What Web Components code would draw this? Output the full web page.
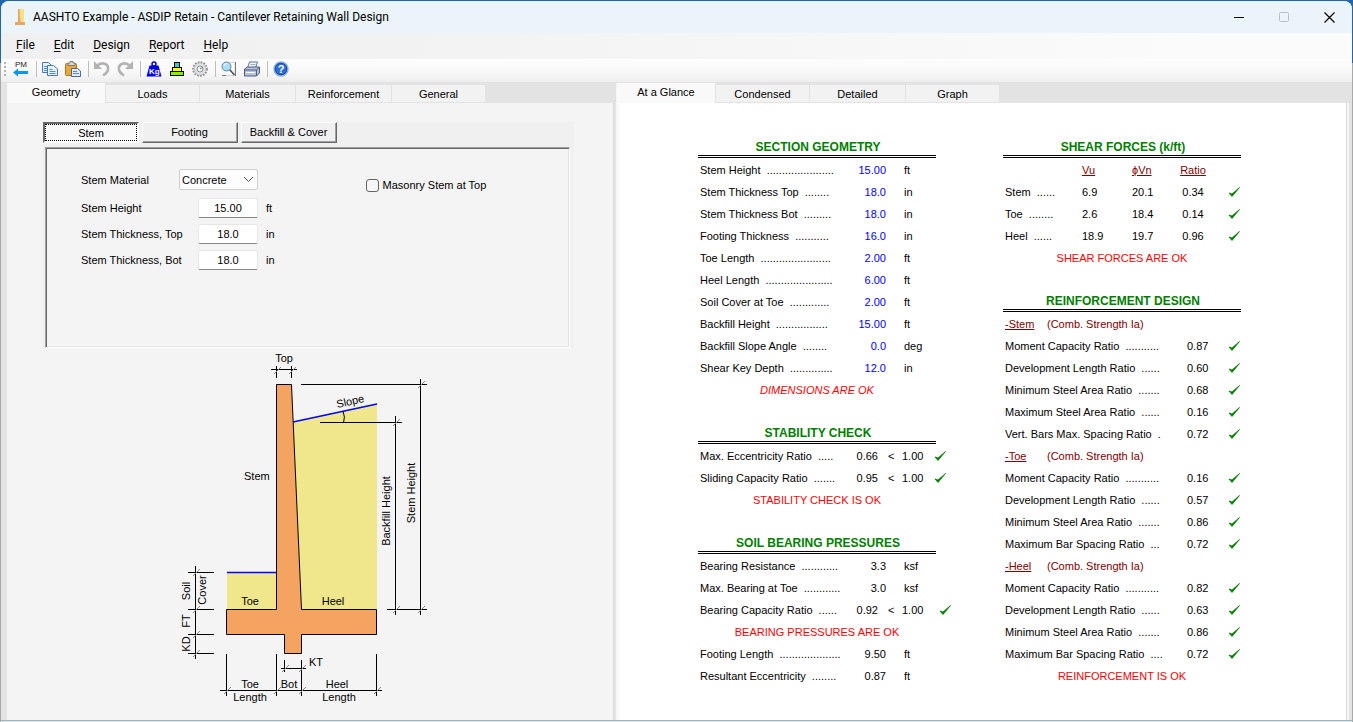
<!DOCTYPE html>
<html lang="en">
<head>
<meta charset="utf-8">
<title>AASHTO Example - ASDIP Retain</title>
<style>
  html { height: 100%; }
  body {
    margin: 0; min-height: 100%; display: flex; flex-direction: column;
    background: linear-gradient(#2166ab 0 63px, #a9a9a9 63px);
    font: 11px/14px "Liberation Sans", Arial, sans-serif; color: #000;
  }
</style>
</head>
<body>
<app-window>
  <title-bar slot="title">AASHTO Example - ASDIP Retain - Cantilever Retaining Wall Design</title-bar>
  <menu-bar slot="menu"></menu-bar>
  <tool-bar slot="tools"></tool-bar>
  <tab-pane class="input" tabs="Geometry,Loads,Materials,Reinforcement,General">
    <sub-tabs tabs="Stem,Footing,Backfill &amp; Cover"><stem-form></stem-form></sub-tabs>
    <wall-diagram></wall-diagram>
  </tab-pane>
  <tab-pane class="output" tabs="At a Glance,Condensed,Detailed,Graph">
    <glance-report></glance-report>
  </tab-pane>
</app-window>

<script>
const define = (name, html, init) => customElements.define(name, class extends HTMLElement {
  constructor() {
    super();
    const tpl = document.createElement('template');
    tpl.innerHTML = html;
    this.attachShadow({ mode: 'open' }).append(tpl.content.cloneNode(true));
  }
  connectedCallback() { if (init) init(this, this.shadowRoot); }
});

const esc = s => s.replace(/&/g, '&amp;').replace(/</g, '&lt;');

define('app-window', `
<style>
  :host { display: flex; flex-direction: column; flex: 1; margin: 1px; overflow: hidden;
    border-radius: 8px 8px 0 0; background: #e3e3e3; box-shadow: 0 1px #dbe7ea; border-bottom: 1px solid #9fb5bd; }
  main { flex: 1; display: grid; grid-template-columns: 609fr 735fr; padding: 1px 1px 0 6px; }
</style>
<slot name="title"></slot><slot name="menu"></slot><slot name="tools"></slot>
<main><slot></slot></main>`);

define('title-bar', `
<style>
  :host { display: flex; align-items: center; height: 32px; padding-left: 12px; background: #ebf4f8;
    font: 12px/16px Roboto, "Segoe UI", sans-serif; }
  h1 { font: inherit; margin: 0 auto 0 6px; }
  .logo { width: 14px; height: 18px; }
  button { width: 45px; height: 32px; border: 0; padding: 0; background: none; display: grid; place-items: center; }
</style>
<svg class="logo" viewBox="0 0 14 18"><path d="M6 1h5v14H6z" fill="#f3e28c"/><path d="M5 1h1.500l1 13H12v3H2v-3h3z" fill="#e9a766"/></svg>
<h1><slot></slot></h1>
<button aria-label="Minimize"><svg width="11" height="11"><path d="M0 5.500h10" stroke="#000"/></svg></button>
<button aria-label="Maximize" disabled><svg width="11" height="11"><rect x=".5" y=".5" width="9" height="9" rx="1" fill="none" stroke="#b9bfc2"/></svg></button>
<button aria-label="Close"><svg width="11" height="11"><path d="M.5 .5l10 10M10.500 .5l-10 10" stroke="#000" stroke-width="1.200"/></svg></button>`);

define('menu-bar', `
<style>
  :host { display: block; background: linear-gradient(90deg, #f0f0f0, #f2f2f2 30%, #fbfbfb 90%);
    font: 12px/16px Roboto, "Segoe UI", sans-serif; }
  nav { display: flex; gap: 19px; padding: 4px 15px 5px; height: 17px; }
  a { color: #000; text-decoration: none; }
  u { text-underline-offset: 2px; }
</style>
<nav><a href="#file"><u>F</u>ile</a><a href="#edit"><u>E</u>dit</a><a href="#design"><u>D</u>esign</a><a href="#report"><u>R</u>eport</a><a href="#help"><u>H</u>elp</a></nav>`);

define('tool-bar', `
<style>
  :host { box-sizing: border-box; display: flex; align-items: center; height: 23px; padding: 0 0 3px 3px;
    background: linear-gradient(#fdfdfd, #f9f9f9 50%, #eee); }
  button { width: 23px; height: 20px; padding: 0; border: 0; background: none; display: grid; place-items: center; }
  svg { width: 16px; height: 16px; display: block; }
  .grip { width: 2px; height: 14px; margin-right: 3px; background: repeating-linear-gradient(#b4b4b4 0 2px, transparent 2px 4px); }
  i { width: 1px; height: 16px; margin: 0 1px 0 4px; background: #bdbdbd; }
  text { font-family: "Liberation Sans", Arial, sans-serif; }
</style>
<span class="grip"></span>
<button aria-label="Project manager"><svg viewBox="0 0 16 16"><text x="2" y="6" font-size="8" fill="#222">PM</text><path d="M0 11.500l5-4v2.500h10v3H5v2.500z" fill="#0a96f5"/></svg></button>
<i></i>
<button aria-label="Copy"><svg viewBox="0 0 16 16"><g fill="#e8f1fc" stroke="#4a76b8"><path d="M.5 1.500h6l3 3v7h-9z"/><path d="M5.500 4.500h6l4 3.500v6.500h-10z"/></g><path d="M2 5.500h3M2 7.500h3M2 9.500h3M7.500 8.500h3M7.500 10.500h6M7.500 12.500h6" stroke="#4a90d8"/></svg></button>
<button aria-label="Paste"><svg viewBox="0 0 16 16"><rect x=".5" y="2.500" width="11" height="12" rx="1" fill="#e8a93a" stroke="#b3761b"/><path d="M3 4.500V2h2V.5h3V2h2v2.500z" fill="#d8d8d8" stroke="#666" stroke-width=".8"/><path d="M6.500 7.500h6l3 2.500v5.500h-9z" fill="#dfeafa" stroke="#50688e"/><path d="M8 10.500h4M8 12.500h6" stroke="#5a86c0"/></svg></button>
<i></i>
<button aria-label="Undo"><svg viewBox="0 0 16 16"><path d="M3 5C8 0 15 3 14 8.500c-.4 3-2.500 4.500-5 6" fill="none" stroke="#b3b3b3" stroke-width="2.600"/><path d="M0 0v8h8z" fill="#b3b3b3"/></svg></button>
<button aria-label="Redo"><svg viewBox="0 0 16 16"><path d="M13 5C8 0 1 3 2 8.500c.4 3 2.500 4.500 5 6" fill="none" stroke="#b3b3b3" stroke-width="2.600"/><path d="M16 0v8H8z" fill="#b3b3b3"/></svg></button>
<i></i>
<button aria-label="Units"><svg viewBox="0 0 16 16"><path d="M3.500 4.500h9L15.500 15.500H.5z" fill="#0000f0"/><circle cx="8" cy="3" r="2" fill="none" stroke="#0000f0" stroke-width="1.500"/><text x="3" y="13" font-size="8" font-weight="bold" fill="#fff">Kg</text></svg></button>
<button aria-label="Load combinations"><svg viewBox="0 0 16 16" stroke="#000"><rect x="5.500" y="1.500" width="5" height="5" fill="#3cc"/><rect x="3.500" y="6.500" width="9" height="4" fill="#ff0"/><rect x="1.500" y="10.500" width="13" height="4" fill="#8e0"/></svg></button>
<button aria-label="Options"><svg viewBox="0 0 16 16"><circle cx="8" cy="8" r="6.900" fill="none" stroke="#8c8c8c" stroke-width="1.800" stroke-dasharray="1.700 1.300"/><circle cx="8" cy="8" r="6" fill="#dfe2e6" stroke="#aaa" stroke-width=".6"/><circle cx="8" cy="8" r="3" fill="#f4f6f8" stroke="#8a8f94"/><path d="M8 8l3-2" stroke="#777"/></svg></button>
<i></i>
<button aria-label="Preview"><svg viewBox="0 0 16 16"><path d="M3 1.500h11v13h-9" fill="#fff" stroke="#d5d5d5"/><path d="M14.500 1v14M1 14.500h4" stroke="#777"/><path d="M8.500 8.500l5 5.500" stroke="#555" stroke-width="1.800"/><circle cx="5.500" cy="5.500" r="4.500" fill="#a9def5" stroke="#5d87a8"/><path d="M3 5a3 3 0 013-2.500" stroke="#fff" fill="none"/></svg></button>
<button aria-label="Print"><svg viewBox="0 0 16 16"><path d="M5.500 1h8l-2 6h-8z" fill="#f2f7fd" stroke="#5d7598"/><path d="M.5 8l3-2h12v6l-3 3H.5z" fill="#b5c2d8" stroke="#4d5f80"/><path d="M.5 9h12l3-3M12.500 9v6" stroke="#4d5f80" fill="none"/><path d="M2 11.500h9" stroke="#fff"/><path d="M6.500 3.500h5M6 5.500h5" stroke="#9ab"/></svg></button>
<i></i>
<button aria-label="Help"><svg viewBox="0 0 16 16"><circle cx="8" cy="8" r="7" fill="#2a6fd6" stroke="#8fb0dc" stroke-width="1.500"/><circle cx="8" cy="8" r="5.700" fill="none" stroke="#1a4ca8"/><text x="8" y="12" font-size="11" font-weight="bold" text-anchor="middle" fill="#fff">?</text></svg></button>`);

/* Tab strip with its page; the first tab is the selected one. */
define('tab-pane', `
<style>
  :host { display: flex; flex-direction: column; min-width: 0; }
  [role=tablist] { display: flex; height: 20px; align-items: flex-end; }
  button { box-sizing: border-box; width: 96px; height: 18px; padding: 0; border: solid #e3e3e3; border-width: 0 0 1px 1px;
    background: #f2f2f2; font: inherit; color: inherit; }
  [aria-selected=true] { width: 98px; height: 20px; border: 0; background: #f9f9f9; padding-bottom: 2px; }
  [aria-selected=true] + button, button:last-child { width: 94px; }
  .page { flex: 1; background: #f4f4f4; border-right: 1px solid #dcdcdc; margin-right: 2px; }
  :host(.output) { border-left: 1px solid #f6f6f6; }
  :host(.output) .page { background: #fff; border-left: 2px solid #f9f9f9; box-shadow: 2px 0 #f4f4f4; margin-right: 4px; }
</style>
<div role="tablist"></div><div class="page" role="tabpanel"><slot></slot></div>`,
(el, root) => {
  root.querySelector('[role=tablist]').innerHTML = el.getAttribute('tabs').split(',')
    .map((t, i) => `<button role="tab" aria-selected="${i === 0}">${esc(t)}</button>`).join('');
});

/* Classic raised buttons above a sunken page. */
define('sub-tabs', `
<style>
  :host { display: block; margin: 19px 39px 0 36px; background: #f0f0f0; }
  [role=tablist] { display: flex; gap: 3px; padding-bottom: 4px; }
  button { box-sizing: border-box; width: 96px; height: 21px; padding: 0 1px 1px 0; font: inherit; color: inherit;
    background: #f0f0f0; border: 1px solid; border-color: #fff #696969 #696969 #fff; box-shadow: inset -1px -1px #a0a0a0; }
  [aria-selected=true] { background: #f9f9f9; border: 2px solid; border-color: #696969 #fff #fff #696969; box-shadow: none;
    outline: 1px dotted #000; outline-offset: -3px; padding: 0; }
  .page { box-sizing: border-box; height: 201px; margin: 0 4px 0 2px; background: #f4f4f4; border: 1px solid;
    border-color: #a0a0a0 #fff #fff #a0a0a0; box-shadow: inset 1px 1px #696969, inset -1px -1px #e3e3e3; }
</style>
<div role="tablist"></div><div class="page"><slot></slot></div>`,
(el, root) => {
  root.querySelector('[role=tablist]').innerHTML = el.getAttribute('tabs').split(',')
    .map((t, i) => `<button role="tab" aria-selected="${i === 0}">${esc(t)}</button>`).join('');
});

define('stem-form', `
<style>
  :host { display: flex; align-items: flex-start; gap: 91px; padding: 19px 35px; white-space: nowrap; }
  .fields { display: grid; grid-template-columns: 98px 79px auto; grid-template-rows: 25px 20px 20px 20px; row-gap: 6px;
    align-items: center; }
  .pick { display: grid; align-items: center; }
  .pick > * { grid-area: 1 / 1; }
  .pick svg { justify-self: end; margin-right: 4px; pointer-events: none; }
  select { appearance: none; width: 79px; height: 21px; border: 1px solid #cfcfcf; border-radius: 2px; background: #fdfdfd;
    padding: 0 2px; font: inherit; color: inherit; }
  input[type=text] { box-sizing: border-box; justify-self: end; width: 60px; height: 20px; padding: 0; text-align: center;
    border: 1px solid #e8e8e8; border-bottom-color: #868686; border-radius: 2px; background: #fff; font: inherit; color: inherit; }
  .unit { padding-left: 8px; }
  .check { display: flex; align-items: center; gap: 4px; padding-top: 11px; }
  .check input { appearance: none; box-sizing: border-box; width: 13px; height: 13px; margin: 0; border: 1px solid #666; border-radius: 3px; background: #f6f6f6; }
</style>
<div class="fields">
  <label for="mat">Stem Material</label>
  <span class="pick"><select id="mat"><option>Concrete</option><option>Masonry</option></select>
    <svg width="11" height="7"><path d="M1 1l4.500 4.500L10 1" fill="none" stroke="#555"/></svg></span><span></span>
  <label for="h">Stem Height</label><input id="h" type="text" value="15.00"><span class="unit">ft</span>
  <label for="tt">Stem Thickness, Top</label><input id="tt" type="text" value="18.0"><span class="unit">in</span>
  <label for="tb">Stem Thickness, Bot</label><input id="tb" type="text" value="18.0"><span class="unit">in</span>
</div>
<label class="check"><input type="checkbox">Masonry Stem at Top</label>`);

/* Dimension lines end in an oblique tick; each tick is drawn at the crossing point. */
const ticks = [[277,370],[292,370],[421,384],[396,422],[396,609],[421,609],[196,572],[196,609],[196,634],[196,653],
  [285,668],[302,668],[227,690],[277,690],[302,690],[377,690]]
  .map(([x, y]) => `M${x - 3} ${y + 4}l7 -7`).join('');

define('wall-diagram', `
<style>
  :host { display: block; padding-left: 163px; }
  svg { display: block; }
  text { font: 11px "Liberation Sans", Arial, sans-serif; }
  .m { text-anchor: middle; }
</style>
<svg width="280" height="359" viewBox="170 348 280 359" role="img" aria-label="Retaining wall dimensions">
  <path d="M293 422L377 404V609H302zM227 573h50v36h-50z" fill="#f0e68c"/>
  <path d="M276.500 384.500H291.500L301.500 609.500H376.500V634.500H301.500V653.500H284.500V634.500H226.500V609.500H276.500z" fill="#f4a460" stroke="#000"/>
  <path d="M293 422L377 404M227 572.500H276" stroke="#00f" stroke-width="1.600" fill="none"/>
  <g stroke="#000" fill="none">
    <path d="M271 369.500H297M276.500 366V378M291.500 366V378"/>
    <path d="M301 384.500H427M420.500 379V615M320 422.500H402M395.500 416V615M387 609.500H427"/>
    <path d="M343 411Q345.500 417 343.500 423"/>
    <path d="M188 572.500H214M188 609.500H214M188 634.500H214M188 653.500H214M195.500 566V659"/>
    <path d="M281 668.500H306M284.500 660V672"/>
    <path d="M220 690.500H382M226.500 654V696M276.500 654V696M301.500 660V696M376.500 654V696"/>
    <path d="${ticks}" stroke="#888"/>
  </g>
  <text class="m" x="284" y="362">Top</text>
  <text x="244" y="480">Stem</text>
  <text class="m" transform="translate(351 405) rotate(-12)">Slope</text>
  <text class="m" x="250" y="605">Toe</text>
  <text class="m" x="333" y="605">Heel</text>
  <text class="m" transform="translate(390 511) rotate(-90)">Backfill Height</text>
  <text class="m" transform="translate(415 493) rotate(-90)">Stem Height</text>
  <text class="m" transform="translate(190 591) rotate(-90)">Soil</text>
  <text class="m" transform="translate(206 590) rotate(-90)">Cover</text>
  <text class="m" transform="translate(190 621) rotate(-90)">FT</text>
  <text class="m" transform="translate(190 644) rotate(-90)">KD</text>
  <text x="309" y="666">KT</text>
  <text class="m" x="250" y="688">Toe</text>
  <text class="m" x="250" y="701">Length</text>
  <text class="m" x="289" y="688">Bot</text>
  <text class="m" x="337" y="688">Heel</text>
  <text class="m" x="339" y="701">Length</text>
</svg>`);

define('check-mark', `
<style>:host { display: block; white-space: normal; } svg { display: block; }</style>
<svg width="12" height="11" role="img" aria-label="OK"><path d="M1 6l3 3.500L11.500 .5L4 7z" fill="#008000" stroke="#008000" stroke-width=".8"/></svg>`);

const reportCss = `
<style>
  :host { display: block; }
  h2 { box-sizing: border-box; height: 21px; margin: 0 0 1px; padding-left: 2px; border-bottom: 3px double #000;
    font-size: 12px; line-height: 20px; text-align: center; color: #008000; }
  table { border-collapse: collapse; table-layout: fixed; width: 252px; }
  td, th { height: 22px; padding: 0; font-weight: normal; text-align: left; white-space: pre; }
  th { padding-left: 2px; }
  .num { text-align: right; }
  .mid { text-align: center; }
  .blue { color: #00f; }
  .mark { padding-left: 4px; }
  .far .mark { padding-left: 9px; }
  .head { color: #800000; }
  p { margin: 0; line-height: 22px; text-align: center; color: #f00; }
  .slant { font-style: italic; }
</style>`;
const dots = n => '.'.repeat(n);
const cols = list => `<colgroup>${list.map(w => `<col style="width:${w}px">`).join('')}</colgroup>`;

/* Rows of label, value and unit, or label, ratio < limit and a tick. */
const valueTable = (rows, cls = '') => `<table>${cols([150, 38, 16, 28, 20])}${rows.map(([label, n, v, unit, far]) =>
  unit === '<'
    ? `<tr class="${far ? 'far' : ''}"><th scope="row">${label}  ${dots(n)}</th><td class="num" style="padding-right:8px">${v}</td><td style="padding-left:2px">&lt;</td><td>1.00</td><td class="mark"><check-mark></check-mark></td></tr>`
    : `<tr><th scope="row">${label}  ${dots(n)}</th><td class="num ${cls}">${v}</td><td></td><td style="padding-left:2px">${unit}</td><td></td></tr>`).join('')}</table>`;

const ratioTable = (name, rows) => `<table>${cols([42, 142, 40, 28])}
  <tr class="head"><th scope="rowgroup"><u>-${name}</u></th><td colspan="3" style="padding-left:2px">(Comb. Strength Ia)</td></tr>
  ${rows.map(([label, n, v]) => `<tr><th scope="row" colspan="2">${label}  ${dots(n)}</th><td>${v}</td><td style="padding-left:1px"><check-mark></check-mark></td></tr>`).join('')}</table>`;

const section = (name, title, body) => define(name, `${reportCss}<h2>${title}</h2>${body}`);

section('section-geometry', 'SECTION GEOMETRY', valueTable([
  ['Stem Height', 22, '15.00', 'ft'], ['Stem Thickness Top', 8, '18.0', 'in'], ['Stem Thickness Bot', 9, '18.0', 'in'],
  ['Footing Thickness', 11, '16.0', 'in'], ['Toe Length', 23, '2.00', 'ft'], ['Heel Length', 22, '6.00', 'ft'],
  ['Soil Cover at Toe', 13, '2.00', 'ft'], ['Backfill Height', 17, '15.00', 'ft'], ['Backfill Slope Angle', 8, '0.0', 'deg'],
  ['Shear Key Depth', 14, '12.0', 'in']], 'blue') + '<p class="slant">DIMENSIONS ARE OK</p>');

section('stability-check', 'STABILITY CHECK', valueTable([
  ['Max. Eccentricity Ratio', 5, '0.66', '<'], ['Sliding Capacity Ratio', 7, '0.95', '<']]) + '<p>STABILITY CHECK IS OK</p>');

section('bearing-pressures', 'SOIL BEARING PRESSURES', valueTable([
  ['Bearing Resistance', 12, '3.3', 'ksf'], ['Max. Bearing at Toe', 12, '3.0', 'ksf'], ['Bearing Capacity Ratio', 6, '0.92', '<', true]])
  + '<p>BEARING PRESSURES ARE OK</p>' + valueTable([['Footing Length', 20, '9.50', 'ft'], ['Resultant Eccentricity', 8, '0.87', 'ft']]));

section('shear-forces', 'SHEAR FORCES (k/ft)', `<table>${cols([79, 50, 46, 30, 19, 28])}
  <tr class="head"><td></td><td><u>Vu</u></td><td><u>ϕVn</u></td><td class="mid"><u>Ratio</u></td><td></td><td></td></tr>
  ${[['Stem', 6, '6.9', '20.1', '0.34'], ['Toe', 8, '2.6', '18.4', '0.14'], ['Heel', 6, '18.9', '19.7', '0.96']].map(r =>
    `<tr><th scope="row">${r[0]}  ${dots(r[1])}</th><td>${r[2]}</td><td>${r[3]}</td><td class="mid">${r[4]}</td><td></td><td style="padding-left:1px"><check-mark></check-mark></td></tr>`).join('')}
</table><p>SHEAR FORCES ARE OK</p>`);

section('reinforcement-design', 'REINFORCEMENT DESIGN',
  ratioTable('Stem', [['Moment Capacity Ratio', 11, '0.87'], ['Development Length Ratio', 6, '0.60'], ['Minimum Steel Area Ratio', 7, '0.68'],
    ['Maximum Steel Area Ratio', 6, '0.16'], ['Vert. Bars Max. Spacing Ratio', 1, '0.72']]) +
  ratioTable('Toe', [['Moment Capacity Ratio', 11, '0.16'], ['Development Length Ratio', 6, '0.57'], ['Minimum Steel Area Ratio', 7, '0.86'],
    ['Maximum Bar Spacing Ratio', 3, '0.72']]) +
  ratioTable('Heel', [['Moment Capacity Ratio', 11, '0.82'], ['Development Length Ratio', 6, '0.63'], ['Minimum Steel Area Ratio', 7, '0.86'],
    ['Maximum Bar Spacing Ratio', 4, '0.72']]) + '<p>REINFORCEMENT IS OK</p>');

define('glance-report', `
<style>
  :host { display: flex; gap: 67px; padding: 34px 40px 24px 79px; }
  .col { display: flex; flex-direction: column; gap: 22px; width: 238px; }
</style>
<div class="col"><section-geometry></section-geometry><stability-check></stability-check><bearing-pressures></bearing-pressures></div>
<div class="col"><shear-forces></shear-forces><reinforcement-design></reinforcement-design></div>`);
</script>
</body>
</html>
